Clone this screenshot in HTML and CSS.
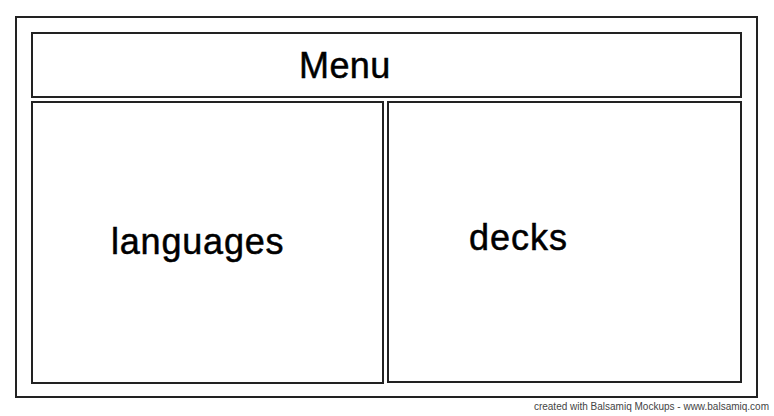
FILE: index.html
```html
<!DOCTYPE html>
<html lang="en">
<head>
    <meta charset="UTF-8">
    <meta name="viewport" content="width=device-width, initial-scale=1.0">
    <title>Mockup</title>
    <link rel="stylesheet" href="styles.css">
</head>
<body>
    <div class="frame">
        <!-- top bar -->
        <div class="menu">Menu</div>

        <!-- two panels -->
        <div class="panels">
            <div class="panel panel-left">languages</div>
            <div class="panel panel-right">decks</div>
        </div>
    </div>
    <p class="credit">created with Balsamiq Mockups - www.balsamiq.com</p>
</body>
</html>
```

FILE: styles.css
```css
body {
    margin: 0;
    background: #fff;
    font-family: "Liberation Sans", Arial, sans-serif;
    color: #000;
}
.frame {
    box-sizing: border-box;
    width: 743px;
    height: 382px;
    margin: 16px 0 0 15px;
    padding: 14px 14px 12px 14px;
    border: 2px solid #222;
    display: flex;
    flex-direction: column;
    gap: 3px;
}
.menu {
    box-sizing: border-box;
    height: 66px;
    border: 2px solid #222;
    padding: 14px 0 0 266px;
    font-size: 36px;
    line-height: 36px;
    letter-spacing: 0.4px;
    -webkit-text-stroke: 0.5px #000;
}
.panels {
    display: flex;
    gap: 3px;
    height: 283px;
}
.panel {
    box-sizing: border-box;
    border: 2px solid #222;
    font-size: 36px;
    line-height: 36px;
    -webkit-text-stroke: 0.5px #000;
}
.panel-left {
    width: 353px;
    padding: 121px 0 0 78px;
    letter-spacing: 0.8px;
}
.panel-right {
    width: 355px;
    height: 282px;
    padding: 117px 0 0 80px;
    letter-spacing: 1px;
}
.credit {
    margin: 3px 5px 0 0;
    text-align: right;
    font-size: 10px;
    line-height: 12px;
    color: #444;
}
```
